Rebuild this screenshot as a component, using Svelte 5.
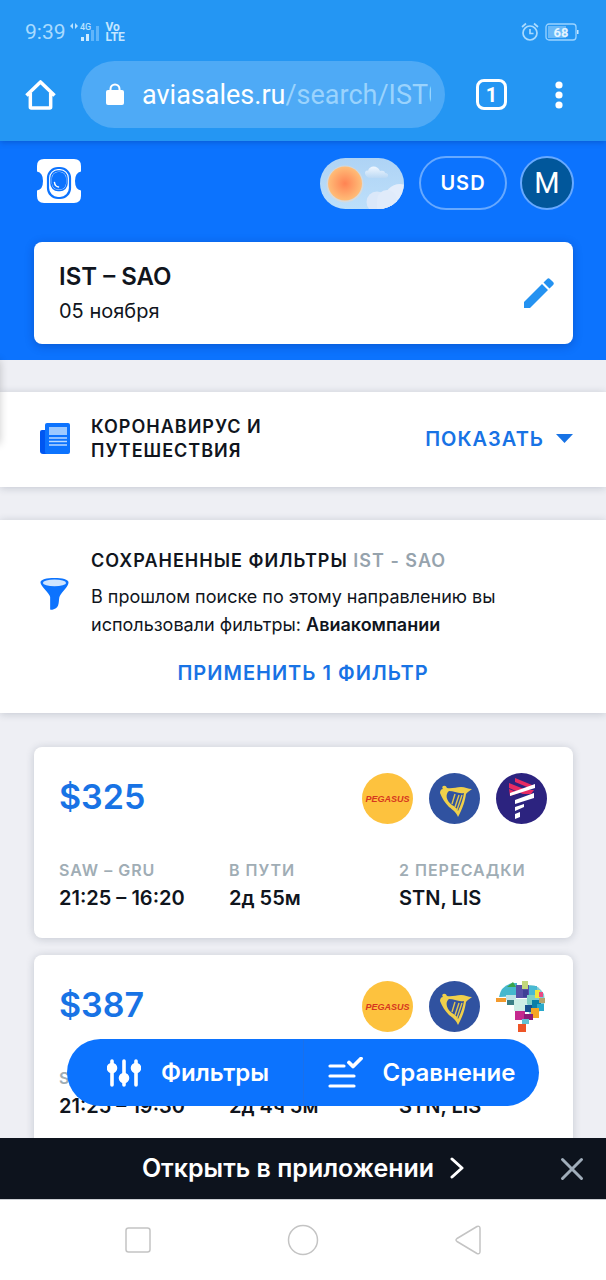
<script>
  const tickets = [
    { price: '$325', route: 'SAW – GRU', time: '21:25 – 16:20', duration: '2д 55м', stops: 'STN, LIS', carriers: ['pegasus', 'ryanair', 'latam'] },
    { price: '$387', route: 'SAW – GRU', time: '21:25 – 19:30', duration: '2д 4ч 5м', stops: 'STN, LIS', carriers: ['pegasus', 'ryanair', 'azul'] }
  ];

  // x, y, width, height, colour of each tile in the mosaic map
  const tiles = [
    [0, 17, 10, 4, '#f39a2d'], [11, 18, 8, 6, '#3b7f86'], [10, 14, 10, 5, '#bfe3e6'], [20, 4, 13, 13, '#5750a8'],
    [26, 0, 6, 8, '#c3d77c'], [33, 5, 8, 11, '#48b9d2'], [27, 9, 5, 7, '#3f3f96'],
    [31, 14, 8, 9, '#7fd0c4'], [39, 9, 5, 8, '#f3e53c'], [43, 11, 4, 5, '#e84a84'],
    [18, 18, 13, 12, '#cdeee6'], [29, 24, 10, 7, '#174f8f'], [36, 19, 9, 8, '#0b7fa6'],
    [43, 17, 6, 5, '#b5a36b'], [41, 23, 7, 7, '#29a9cc'], [35, 27, 8, 10, '#f5a623'],
    [19, 30, 10, 9, '#c42a8e'], [28, 33, 9, 6, '#8b1c78'], [26, 38, 7, 5, '#62c2d3'],
    [22, 43, 8, 8, '#ee5527']
  ];
</script>

<div class="screen">
  <header class="browser">
    <div class="status">
      <div class="status-left">
        <span class="clock">9:39</span>
        <svg width="32" height="20" viewBox="0 0 32 20" aria-hidden="true">
          <path d="M0 4l3-3v6zM8 4L5 1v6z" fill="#b9e2ff" />
          <text x="10" y="8" class="net">4G</text>
          <path d="M11 15h3v4h-3zM16 12h3v7h-3z" fill="#cdeaff" />
          <path d="M21 8h3v11h-3zM26 4h3v15h-3z" fill="#60b5fa" />
        </svg>
        <span class="volte">Vo<br />LTE</span>
      </div>
      <div class="status-right">
        <svg width="18" height="20" viewBox="0 0 18 20" fill="none" stroke="#a9dafe" stroke-width="1.7" aria-hidden="true">
          <circle cx="9" cy="11" r="7" /><path d="M9 7v4.500h3.500M1 5l4-3.500M17 5l-4-3.500" />
        </svg>
        <svg width="34" height="18" viewBox="0 0 34 18" aria-hidden="true">
          <rect x="1" y="1" width="30" height="16" rx="3" fill="none" stroke="#9bd3ff" stroke-width="1.300" />
          <path d="M3 3h18v12H3z" fill="#6bb9f8" /><path d="M32 7h1.500v4H32z" fill="#c9e8ff" />
          <text x="16" y="14" class="charge">68</text>
        </svg>
      </div>
    </div>
    <div class="toolbar">
      <button class="plain" aria-label="Домой">
        <svg width="31" height="32" viewBox="0 0 32 32" fill="none" stroke="#fff" stroke-width="3.600" stroke-linejoin="round">
          <path d="M1.500 16.500L16 2.500l14.500 14M5.500 14v14.500q0 1 1 1h19q1 0 1-1V14" />
        </svg>
      </button>
      <a class="address" href="#search">
        <svg width="18" height="23" viewBox="0 0 18 23" aria-hidden="true">
          <path d="M4.500 8V6a4.500 4.500 0 0 1 9 0v2" fill="none" stroke="#fff" stroke-width="2" /><rect y="7" width="18" height="15" rx="2" fill="#fff" />
        </svg>
        <span class="url">aviasales.ru<span>/search/IST0</span></span>
      </a>
      <button class="tabs" aria-label="Вкладки">1</button>
      <button class="plain" aria-label="Меню">
        <svg width="8" height="28" viewBox="0 0 8 28" fill="#fff"><circle cx="4" cy="4" r="3.600" /><circle cx="4" cy="14" r="3.600" /><circle cx="4" cy="24" r="3.600" /></svg>
      </button>
    </div>
  </header>

  <main>
    <section class="hero">
      <div class="site-bar">
        <a class="logo" href="#home" aria-label="Aviasales">
          <svg width="44" height="44" viewBox="0 0 44 44">
            <path d="M7 0h30q7 0 7 7v5.500q-6 1-6 9.500t6 9.500V37q0 7-7 7H7q-7 0-7-7v-5.500q6-1 6-9.500t-6-9.500V7q0-7 7-7z" fill="#fff" />
            <rect x="11" y="9" width="22" height="30" rx="10" fill="none" stroke="#0c73fe" stroke-width="2.200" />
            <rect x="14" y="12" width="16" height="19.500" rx="7" fill="none" stroke="#0c73fe" stroke-width="1.500" />
            <rect x="15" y="13" width="14" height="17.500" rx="6" fill="#0c73fe" />
            <path d="M17.500 23.500q.5 4 4 4.500" fill="none" stroke="#fff" stroke-width="1.500" stroke-linecap="round" />
          </svg>
        </a>
        <button class="theme" aria-label="Светлая тема">
          <svg width="84" height="51" viewBox="0 0 84 51">
            <defs>
              <radialGradient id="sun"><stop offset="0" stop-color="#ff8353" /><stop offset="1" stop-color="#ffbd78" /></radialGradient>
              <linearGradient id="sky" x2="0" y2="1"><stop offset="0" stop-color="#aed3f5" /><stop offset="1" stop-color="#bddffa" /></linearGradient>
              <linearGradient id="cloud" x2="0" y2="1"><stop offset="0" stop-color="#f0f7ff" /><stop offset="1" stop-color="#bcd9f4" /></linearGradient>
              <clipPath id="pill"><rect width="84" height="51" rx="25.500" /></clipPath>
            </defs>
            <g clip-path="url(#pill)">
              <rect width="84" height="51" fill="url(#sky)" />
              <path d="M45 15c0-2 2-3 3-2 1-6 10-6 12 0 4-1 5 1 5 2 4 0 4 4 1 5H49q-4-2-4-5z" fill="url(#cloud)" />
              <circle cx="57" cy="44" r="10.500" fill="#dbe8f9" /><circle cx="80" cy="42" r="16" fill="#e3edfb" /><circle cx="67" cy="42" r="10" fill="#e0ebfa" /><path d="M57 43h27v10H57z" fill="#e0ebfa" />
              <circle cx="25" cy="26" r="18.500" fill="#e8d9cc" opacity=".6" /><circle cx="25" cy="25.500" r="17" fill="url(#sun)" />
            </g>
          </svg>
        </button>
        <button class="currency">USD</button>
        <button class="avatar" aria-label="Профиль">M</button>
      </div>
      <button class="search">
        <span class="search-text"><strong>IST – SAO</strong><span>05 ноября</span></span>
        <svg width="30" height="30" viewBox="0 0 30 30" fill="#2492f1" aria-hidden="true">
          <path d="M0 24L18 6l6 6L6 30H0zM19.500 4.500l3.600-3.600q1.400-1.400 2.800 0l3.200 3.200q1.400 1.400 0 2.800l-3.600 3.600z" />
        </svg>
      </button>
    </section>

    <div class="results">
      <section class="panel news">
        <svg width="30" height="32" viewBox="0 0 30 32" aria-hidden="true">
          <path d="M0 9q0-2 2-2h5v24H3q-3 0-3-3z" fill="#0056f1" /><rect x="5" width="25" height="31" rx="2" fill="#0c73fe" />
          <path d="M9 4h18v8H9z" fill="#9cc9ff" /><path d="M9 15h18M9 18.500h18M9 22h18" stroke="#b9d9ff" stroke-width="1.400" />
        </svg>
        <h2>Коронавирус и путешествия</h2>
        <button class="link">Показать
          <svg width="17" height="9" viewBox="0 0 17 9" aria-hidden="true"><path d="M0 0h17L8.500 9z" fill="#1873e5" /></svg>
        </button>
      </section>

      <section class="panel saved">
        <svg width="29" height="34" viewBox="0 0 30 34" aria-hidden="true">
          <path d="M.500 5C.500 2 7 .500 15 .500S29.500 2 29.500 5c0 4-7 10-9 14-2 4 1 12-7 14-1 .3-2 .3-3 0V20C10 16 .500 9 .500 5z" fill="#0c73fe" /><ellipse cx="15" cy="5.500" rx="12" ry="3.500" fill="#cfe5ff" />
        </svg>
        <div>
          <h2>Сохраненные фильтры <span>IST - SAO</span></h2>
          <p>В прошлом поиске по этому направлению вы использовали фильтры: <b>Авиакомпании</b></p>
        </div>
        <button class="link apply">Применить 1 фильтр</button>
      </section>

      <div class="tickets">
        {#each tickets as t}
          <article class="ticket">
            <div class="ticket-head">
              <span class="price">{t.price}</span>
              <div class="carriers">
                {#each t.carriers as c}
                  <svg width="51" height="51" viewBox="0 0 51 51" aria-hidden="true">
                    {#if c === 'pegasus'}
                      <circle cx="25.500" cy="25.500" r="25.500" fill="#fdc23e" />
                      <text x="25.500" y="29" class="pegasus">PEGASUS</text>
                    {:else if c === 'ryanair'}
                      <circle cx="25.500" cy="25.500" r="25.500" fill="#3052a0" />
                      <path d="M14 13q3-1 4 2c5 1 9-1 14-1 4 0 7 2 11 2-2 2-5 3-6 5-1 7-3 14-8 23-2-5-5-7-9-10-4-4-7-9-9-14 0-2 1-4 3-4-1-1-1-2 0-3zM20 18c-4 3-3 10 3 14 3 2 5 3 6 6 3-6 5-12 6-18-6 1-10-2-15-2z" fill="#f0d04b" fill-rule="evenodd" />
                      <path d="M23 31l3-10M26 34l4-12M28 37l5-15" stroke="#dfc451" stroke-width="1.400" />
                    {:else if c === 'latam'}
                      <circle cx="25.500" cy="25.500" r="25.500" fill="#2c237f" />
                      <path d="M19 5l17 7v4l-17-7zM13 10l20 8-6 3-14-6zM13 16l10 4-9 3z" fill="#e72b63" />
                      <path d="M30 17h8l-3 4h-8z" fill="#e72b63" />
                      <path d="M14 20l25-9v4l-25 8zM19 27l19-7v5l-19 6zM19 34l9-3v3l-9 4zM19 41l5-2v5l-5 2z" fill="#fff" />
                    {:else}
                      <path d="M3 16Q5 4 17 2l4 0v13z" fill="#45b8cd" /><path d="M11 6l6-5 3 5z" fill="#3aa34a" /><path d="M33 4q9-1 15 9l1 8-5 9-9 7-4-10z" fill="#7ecbd4" />
                      {#each tiles as [x, y, width, height, fill]}
                        <rect {x} {y} {width} {height} {fill} />
                      {/each}
                    {/if}
                  </svg>
                {/each}
              </div>
            </div>
            <dl>
              <div><dt>{t.route}</dt><dd>{t.time}</dd></div>
              <div><dt>В пути</dt><dd>{t.duration}</dd></div>
              <div><dt>2 пересадки</dt><dd>{t.stops}</dd></div>
            </dl>
          </article>
        {/each}
      </div>
    </div>

    <div class="actions">
      <button>
        <svg width="34" height="28" viewBox="0 0 34 28" fill="#fff" stroke="#fff" stroke-width="3.600" stroke-linecap="round" aria-hidden="true">
          <path d="M5 2v24M17 2v24M29 2v24" /><circle cx="5" cy="9" r="3.500" /><circle cx="17" cy="19" r="3.500" /><circle cx="29" cy="9" r="3.500" />
        </svg>
        Фильтры
      </button>
      <button>
        <svg width="35" height="32" viewBox="0 0 35 32" fill="none" stroke="#fff" stroke-width="3.200" stroke-linecap="round" stroke-linejoin="round" aria-hidden="true">
          <path d="M2 9h14M2 19h24M2 29h24" /><path d="M21 5.500l4 4 8-8" stroke-width="3.800" />
        </svg>
        Сравнение
      </button>
    </div>
  </main>

  <aside class="app-bar">
    <a href="#app">Открыть в приложении
      <svg width="14" height="22" viewBox="0 0 14 22" fill="none" stroke="#fff" stroke-width="3" stroke-linecap="round" stroke-linejoin="round" aria-hidden="true"><path d="M2 2l10 9-10 9" /></svg>
    </a>
    <button class="plain" aria-label="Закрыть">
      <svg width="24" height="24" viewBox="0 0 24 24" stroke="#a0adba" stroke-width="3" stroke-linecap="round"><path d="M2.500 2.500l19 19M21.500 2.500l-19 19" /></svg>
    </button>
  </aside>

  <nav class="system">
    <button class="plain" aria-label="Недавние"><svg width="26" height="26" viewBox="0 0 26 26"><rect x="1" y="1" width="24" height="24" rx="2.500" /></svg></button>
    <button class="plain" aria-label="Главный экран"><svg width="32" height="32" viewBox="0 0 32 32"><circle cx="16" cy="16" r="14.500" /></svg></button>
    <button class="plain" aria-label="Назад"><svg width="26" height="30" viewBox="0 0 26 30"><path d="M2 13.500L22 1.500q3-1 3 2v23q0 3-3 2L2 16.500q-2-1.500 0-3z" stroke-linejoin="round" /></svg></button>
  </nav>
</div>

<style>
  :global(body) { margin: 0; }
  * { box-sizing: border-box; }
  svg { display: block; flex: none; }
  button { font: inherit; color: inherit; border: 0; padding: 0; background: none; cursor: pointer; }
  a { color: inherit; text-decoration: none; }
  h2, p, dl, dd { margin: 0; }

  .screen { height: 100vh; display: flex; flex-direction: column; font-family: Inter, sans-serif; color: #10151d; background: #fff; overflow: hidden; }
  .plain { display: flex; align-items: center; justify-content: center; }

  .browser { flex: none; background: #2496f3; color: #fff; font-family: Roboto, sans-serif; padding: 20px 0 13px; position: relative; z-index: 1; box-shadow: 0 1px 6px rgba(0, 40, 120, .35); }
  .status { display: flex; justify-content: space-between; align-items: center; padding: 0 27px 0 25px; height: 24px; color: #c4e6ff; }
  .status-left { display: flex; align-items: center; gap: 4px; }
  .status-right { display: flex; align-items: center; gap: 6px; }
  .clock { font-size: 21px; line-height: 24px; color: #a9dbff; }
  .net { font: 500 9px Roboto, sans-serif; fill: #b9e2ff; }
  .volte { font-size: 12px; line-height: 10px; font-weight: 700; text-align: left; }
  .charge { font: 700 13px Roboto, sans-serif; fill: #e3f4ff; text-anchor: middle; }
  .toolbar { display: flex; align-items: center; padding: 0 43px 0 25px; margin-top: 17px; }
  .address { flex: 1; min-width: 0; height: 67px; margin: 0 31px 0 25px; padding: 0 14px 0 25px; display: flex; align-items: center; gap: 18px; border-radius: 34px; background: #4eaaf6; }
  .url { flex: 1; min-width: 0; overflow: hidden; white-space: nowrap; font-size: 27px; line-height: 36px; }
  .url span { color: #9ad3fd; }
  .tabs { width: 31px; height: 31px; margin-right: 48px; border: 3px solid #fff; border-radius: 8px; font-size: 20px; font-weight: 700; line-height: 24px; }

  main { flex: 1; min-height: 0; position: relative; overflow: hidden; background: #eeeff4; }
  .hero { background: #0c73fe; padding: 15px 33px 16px 34px; }
  .site-bar { display: flex; align-items: center; height: 54px; }
  .logo { margin: 0 auto 4px 3px; }
  .theme { margin-right: 15px; }
  .currency { width: 88px; height: 54px; margin-right: 13px; border: 2px solid #67a9ff; border-radius: 27px; color: #fff; font-size: 20px; font-weight: 600; letter-spacing: 1px; }
  .avatar { width: 54px; height: 54px; margin-right: -1px; border: 2px solid #67a9ff; border-radius: 50%; background: #01579b; color: #fff; font: 400 29px Roboto, sans-serif; }
  .search { width: 100%; height: 102px; margin-top: 32px; padding: 0 19px 0 25px; display: flex; align-items: center; justify-content: space-between; text-align: left; border-radius: 8px; background: #fff; box-shadow: 0 2px 10px rgba(0, 30, 110, .3); }
  .search-text { display: flex; flex-direction: column; gap: 4px; font-size: 20px; line-height: 28px; }
  .search-text strong { font-size: 24px; line-height: 32px; font-weight: 600; }

  .results { position: relative; padding-top: 32px; }
  .results::before { content: ''; position: absolute; z-index: 1; left: -10px; top: 0; width: 10px; height: 84px; box-shadow: 0 0 8px rgba(0, 0, 0, .2); }
  .panel { background: #fff; box-shadow: 0 1px 8px rgba(30, 45, 70, .2); }
  h2 { font-size: 18px; line-height: 24px; font-weight: 600; letter-spacing: 1px; text-transform: uppercase; }
  h2 span { color: #96a3ad; }
  .link { color: #1873e5; font-size: 20px; line-height: 24px; font-weight: 600; letter-spacing: 1px; text-transform: uppercase; }
  .news { display: flex; align-items: center; height: 95px; padding: 0 33px 2px 40px; }
  .news h2 { flex: 1; max-width: 220px; margin-left: 21px; }
  .news .link { margin-left: auto; display: flex; align-items: center; gap: 12px; }
  .saved { display: grid; grid-template-columns: 51px 1fr; align-items: center; margin-top: 33px; padding: 29px 40px 28px; }
  .saved p { margin-top: 10px; font-size: 18px; line-height: 28px; }
  b { font-weight: 600; }
  .apply { grid-column: 1 / -1; justify-self: center; margin-top: 22px; }

  .tickets { display: grid; gap: 17px; padding: 34px 33px 0 34px; }
  .ticket { padding: 26px 26px 26px 25px; border-radius: 8px; background: #fff; box-shadow: 0 1px 8px rgba(30, 45, 70, .2); }
  .ticket-head { display: flex; align-items: flex-start; justify-content: space-between; }
  .price { color: #1873e5; font-size: 34px; line-height: 48px; font-weight: 600; }
  .carriers { display: flex; gap: 16px; }
  .pegasus { font: italic 700 9px "Liberation Sans", sans-serif; fill: #d6361f; text-anchor: middle; }
  dl { display: grid; grid-template-columns: repeat(3, 1fr); gap: 22px; margin-top: 34px; white-space: nowrap; }
  dt { color: #a0adb5; font-size: 16px; line-height: 24px; font-weight: 600; letter-spacing: 1px; text-transform: uppercase; }
  dd { margin-top: 2px; font-size: 20px; line-height: 28px; font-weight: 600; }

  .actions { position: absolute; left: 67px; right: 67px; bottom: 32px; height: 67px; display: grid; grid-template-columns: 1fr 1fr; border-radius: 34px; background: #0c73fe; color: #fff; }
  .actions button { display: flex; align-items: center; justify-content: center; gap: 20px; font-size: 24px; line-height: 32px; font-weight: 600; }
  .actions button:first-child { padding-left: 6px; }
  .actions button + button { border-left: 1px solid #1a70ea; }

  .app-bar { flex: none; display: grid; grid-template-columns: 1fr auto 1fr; align-items: center; height: 61px; padding: 0 22px; background: #0d131d; color: #fff; }
  .app-bar a { grid-column: 2; display: flex; align-items: center; gap: 16px; padding-bottom: 2px; font-size: 25px; line-height: 32px; font-weight: 600; }
  .app-bar button { justify-self: end; }
  .system { flex: none; height: 81px; display: flex; align-items: center; justify-content: center; gap: 136px; border-top: 1px solid #ccd0d4; background: #fff; }
  .system svg { fill: none; stroke: #c4c4c4; stroke-width: 1.500; }
</style>
